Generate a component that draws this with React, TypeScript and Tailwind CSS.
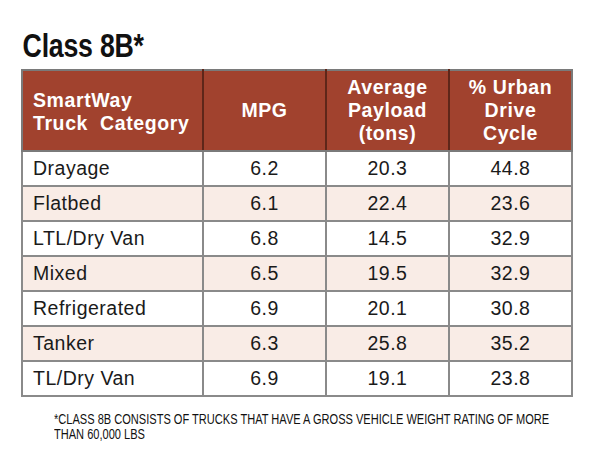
const rows = [
  ["Drayage", "6.2", "20.3", "44.8"],
  ["Flatbed", "6.1", "22.4", "23.6"],
  ["LTL/Dry Van", "6.8", "14.5", "32.9"],
  ["Mixed", "6.5", "19.5", "32.9"],
  ["Refrigerated", "6.9", "20.1", "30.8"],
  ["Tanker", "6.3", "25.8", "35.2"],
  ["TL/Dry Van", "6.9", "19.1", "23.8"],
];

export default function App() {
  return (
    <div className="w-[600px] h-[450px] overflow-hidden bg-white pl-[21px] pt-[27px] font-['Liberation_Sans',Arial,sans-serif]">
      <div className="h-[42px]">
        <h1 className="inline-block origin-left scale-x-[0.81] font-bold text-[33px] leading-[38px] text-[#111] pl-[2px] tracking-[-0.3px]">
          Class 8B*
        </h1>
      </div>
      <table className="border-collapse w-[550px] table-fixed">
        <colgroup>
          <col className="w-[181px]" />
          <col className="w-[123px]" />
          <col className="w-[123px]" />
          <col className="w-[123px]" />
        </colgroup>
        <thead>
          <tr className="h-[81px] bg-[#a1422e] text-white text-[19.5px] leading-[23px] tracking-[0.6px]">
            <th className="border-2 border-[#7a7a7a] border-r-[#5e2619] text-left pl-[10px] pt-[2px] font-bold">
              SmartWay
              <br />
              Truck&nbsp; Category
            </th>
            <th className="border-2 border-[#7a7a7a] border-x-[#5e2619] text-center font-bold">MPG</th>
            <th className="border-2 border-[#7a7a7a] border-x-[#5e2619] text-center font-bold">
              Average
              <br />
              Payload
              <br />
              (tons)
            </th>
            <th className="border-2 border-[#7a7a7a] border-l-[#5e2619] text-center font-bold">
              % Urban
              <br />
              Drive
              <br />
              Cycle
            </th>
          </tr>
        </thead>
        <tbody>
          {rows.map((r, i) => (
            <tr
              key={r[0]}
              className={`h-[35px] text-[19.5px] tracking-[0.5px] text-[#1a1a1a] ${i % 2 === 1 ? "bg-[#f9ece6]" : "bg-white"}`}
            >
              <td className="border-2 border-[#8a8a8a] pl-[10px]">{r[0]}</td>
              <td className="border-2 border-[#8a8a8a] text-center">{r[1]}</td>
              <td className="border-2 border-[#8a8a8a] text-center">{r[2]}</td>
              <td className="border-2 border-[#8a8a8a] text-center">{r[3]}</td>
            </tr>
          ))}
        </tbody>
      </table>
      <div className="mt-[15px] ml-[33px] w-[520px] overflow-hidden">
        <p className="inline-block origin-left scale-x-[0.79] whitespace-nowrap text-[14px] leading-[15px] text-[#111]">
          *CLASS 8B CONSISTS OF TRUCKS THAT HAVE A GROSS VEHICLE WEIGHT RATING OF MORE
          <br />
          THAN 60,000 LBS
        </p>
      </div>
    </div>
  );
}
